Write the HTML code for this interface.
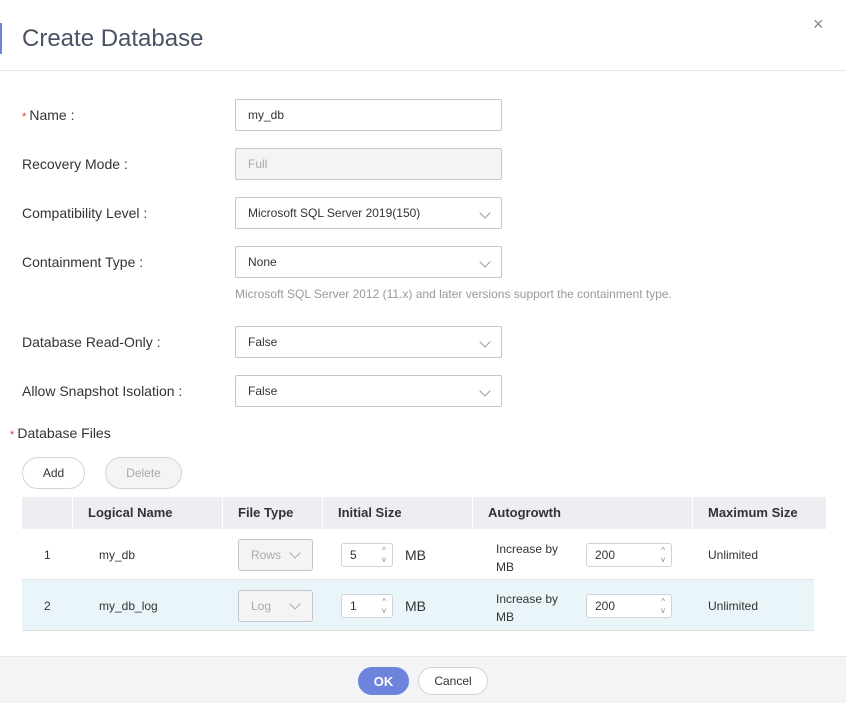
<!DOCTYPE html><html><head><style>
*{box-sizing:border-box;margin:0;padding:0}
body{width:846px;height:703px;background:#fff;font-family:"Liberation Sans",sans-serif;font-size:13px;color:#333;position:relative;overflow:hidden}
.a{position:absolute}
.lbl{position:absolute;left:22px;font-size:14px;color:#333}
.inp{position:absolute;left:235px;width:267px;height:32px;border:1px solid #c4c6cc;border-radius:2px;padding-left:12px;line-height:30px;font-size:12px;color:#333;background:#fff}
.chev{position:absolute;right:12px;top:11px;width:8px;height:8px;border-right:1px solid #999;border-bottom:1px solid #999;transform:rotate(45deg)}
.btn{position:absolute;height:32px;border:1px solid #d0d3d9;border-radius:16px;text-align:center;line-height:30px;font-size:12px;background:#fff}
.th{position:absolute;top:497px;height:32px;line-height:32px;font-weight:bold;font-size:13px;color:#333}
.sep{position:absolute;top:497px;width:1px;height:32px;background:#fff}
.sel{position:absolute;left:238px;width:75px;height:32px;border:1px solid #c4c6cc;border-radius:3px;background:#f4f4f4;color:#aaa;font-size:12px;padding-left:12px;line-height:30px}
.sel .chev{top:9px;right:13px;border-color:#aaa}
.num{position:absolute;height:24px;border:1px solid #d0d3d9;border-radius:3px;background:#fff;font-size:12px;padding-left:8px;line-height:22px}
.num i{position:absolute;right:6px;font-style:normal;font-size:8px;color:#888;line-height:8px}
.sm{font-size:12px}
</style></head><body>
<div class="a" style="left:0;top:23px;width:2px;height:31px;background:#6c84dc"></div>
<div class="a" style="left:22px;top:25px;font-size:24px;color:#4a5364">Create Database</div>
<div class="a" style="left:813px;top:14px;font-size:18px;color:#888">×</div>
<div class="a" style="left:0;top:70px;width:846px;height:1px;background:#e6e6e6"></div>

<div class="lbl" style="top:107px"><span style="color:#e33;font-size:11px">* </span>Name :</div>
<div class="inp" style="top:99px">my_db</div>
<div class="lbl" style="top:156px">Recovery Mode :</div>
<div class="inp" style="top:148px;background:#f4f4f4;color:#aaa">Full</div>
<div class="lbl" style="top:205px">Compatibility Level :</div>
<div class="inp" style="top:197px">Microsoft SQL Server 2019(150)<div class="chev"></div></div>
<div class="lbl" style="top:254px">Containment Type :</div>
<div class="inp" style="top:246px">None<div class="chev"></div></div>
<div class="a" style="left:235px;top:287px;font-size:12px;color:#999">Microsoft SQL Server 2012 (11.x) and later versions support the containment type.</div>
<div class="lbl" style="top:334px">Database Read-Only :</div>
<div class="inp" style="top:326px">False<div class="chev"></div></div>
<div class="lbl" style="top:383px">Allow Snapshot Isolation :</div>
<div class="inp" style="top:375px">False<div class="chev"></div></div>
<div class="lbl" style="top:425px;left:10px"><span style="color:#e33;font-size:11px">* </span>Database Files</div>
<div class="btn" style="left:22px;top:457px;width:63px">Add</div>
<div class="btn" style="left:105px;top:457px;width:77px;background:#f4f4f4;color:#aaa">Delete</div>

<div class="a" style="left:22px;top:497px;width:804px;height:32px;background:#eceef2"></div>
<div class="sep" style="left:72px"></div><div class="sep" style="left:222px"></div><div class="sep" style="left:322px"></div><div class="sep" style="left:472px"></div><div class="sep" style="left:692px"></div>
<div class="th" style="left:88px">Logical Name</div>
<div class="th" style="left:238px">File Type</div>
<div class="th" style="left:338px">Initial Size</div>
<div class="th" style="left:488px">Autogrowth</div>
<div class="th" style="left:708px">Maximum Size</div>
<div class="a" style="left:22px;top:579px;width:792px;height:1px;background:#e6e6e6"></div>
<div class="a" style="left:22px;top:580px;width:792px;height:51px;background:#eaf5fa;border-bottom:1px solid #e0e0e0"></div>

<div class="a sm" style="left:44px;top:548px">1</div>
<div class="a sm" style="left:99px;top:548px">my_db</div>
<div class="sel" style="top:539px">Rows<div class="chev"></div></div>
<div class="num" style="left:341px;top:543px;width:52px">5<i style="top:3px">^</i><i style="top:12px">v</i></div>
<div class="a" style="left:405px;top:547px;font-size:14px">MB</div>
<div class="a sm" style="left:496px;top:540px;line-height:18px">Increase by<br>MB</div>
<div class="num" style="left:586px;top:543px;width:86px">200<i style="top:3px">^</i><i style="top:12px">v</i></div>
<div class="a sm" style="left:708px;top:548px">Unlimited</div>

<div class="a sm" style="left:44px;top:599px">2</div>
<div class="a sm" style="left:99px;top:599px">my_db_log</div>
<div class="sel" style="top:590px">Log<div class="chev"></div></div>
<div class="num" style="left:341px;top:594px;width:52px">1<i style="top:3px">^</i><i style="top:12px">v</i></div>
<div class="a" style="left:405px;top:598px;font-size:14px">MB</div>
<div class="a sm" style="left:496px;top:590px;line-height:18px">Increase by<br>MB</div>
<div class="num" style="left:586px;top:594px;width:86px">200<i style="top:3px">^</i><i style="top:12px">v</i></div>
<div class="a sm" style="left:708px;top:599px">Unlimited</div>

<div class="a" style="left:0;top:656px;width:846px;height:47px;background:#f4f4f4;border-top:1px solid #e6e6e6"></div>
<div class="btn" style="left:358px;top:667px;width:51px;height:28px;line-height:28px;background:#6c84dc;border-color:#6c84dc;color:#fff;font-weight:bold;font-size:13px">OK</div>
<div class="btn" style="left:418px;top:667px;width:70px;height:28px;line-height:26px">Cancel</div>
</body></html>
